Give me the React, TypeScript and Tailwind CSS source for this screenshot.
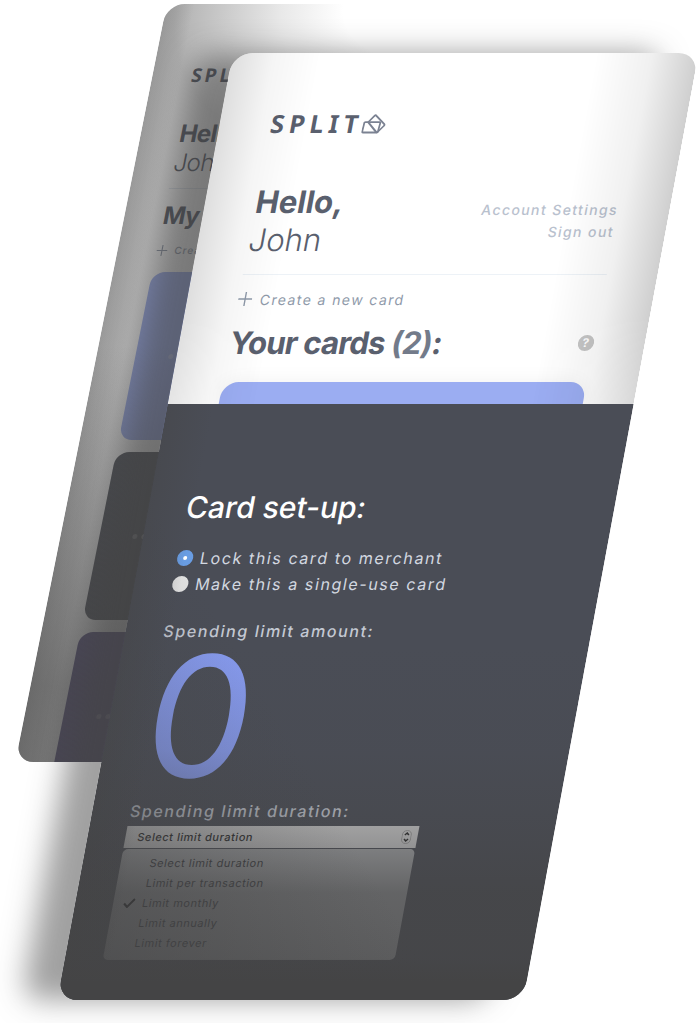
import React from 'react';

const durations = [
  'Select limit duration',
  'Limit per transaction',
  'Limit monthly',
  'Limit annually',
  'Limit forever',
];

function LogoMark({ className }: { className: string }) {
  return (
    <svg viewBox="0 0 24 20" className={className} fill="none" stroke="currentColor" strokeWidth="1.800" strokeLinejoin="round" aria-hidden="true">
      <path d="M2.500 8.200h14a1 1 0 0 1 1 1l-.8 8.300a1 1 0 0 1-1 1H2a1 1 0 0 1-1-1l.5-8.300a1 1 0 0 1 1-1z" />
      <path d="M5.200 8.200l5.400-6.600a1 1 0 0 1 1.500 0l9.600 8.600a1 1 0 0 1 0 1.500l-5.200 6.300a1 1 0 0 1-1.500 0z" />
    </svg>
  );
}

function Plus({ className }: { className: string }) {
  return (
    <svg viewBox="0 0 14 14" className={className} stroke="currentColor" strokeWidth="1.400" aria-hidden="true">
      <path d="M7 0v14M0 7h14" />
    </svg>
  );
}

function BackCard({ tone }: { tone: string }) {
  return (
    <div className={`flex h-[168px] shrink-0 items-center gap-1 rounded-[13px] pl-[33px] ${tone}`}>
      <span className="size-[5px] rounded-full bg-white/30" />
      <span className="size-[5px] rounded-full bg-white/30" />
      <span className="size-[5px] rounded-full bg-white/30" />
    </div>
  );
}

function CardsPanel() {
  return (
    <section className="absolute left-[13%] top-1 h-[758px] w-2/5 -skew-x-[11.3deg] overflow-hidden rounded-[18px] bg-white px-[39px] pt-[59px] text-[#4d525f]">
      <div className="flex h-6 items-center font-['Noto_Sans',sans-serif] text-[19px] font-bold tracking-[3px]">
        SPLIT
        <LogoMark className="ml-1 h-4 w-5" />
      </div>
      <div className="mt-8 text-[24px] leading-[29px] tracking-tight">
        <p className="font-bold">Hello,</p>
        <p className="font-light">John</p>
      </div>
      <hr className="mt-[11px] border-[#e2e8f0]" />
      <h2 className="mt-3 text-[24px] font-bold leading-[30px] tracking-tight">My cards:</h2>
      <button type="button" className="mt-[9px] flex h-5 items-center gap-[7px] text-[10px] font-medium tracking-widest text-[#8d97a8]">
        <Plus className="size-[11px]" />
        Create a new card
      </button>
      <div className="mt-3 flex flex-col gap-3">
        <BackCard tone="bg-[#9badf2]" />
        <BackCard tone="bg-[#4a4d56]" />
        <BackCard tone="bg-[#544b80]" />
      </div>
      <div className="pointer-events-none absolute inset-0 bg-[radial-gradient(ellipse_250px_170px_at_260px_0px,transparent_33%,rgba(68,68,68,0.12)_58%,rgba(68,68,68,0.42)_100%)]" />
      <div className="pointer-events-none absolute inset-0 bg-[linear-gradient(to_right,rgba(68,68,68,0.22),transparent_28px)]" />
      <div className="pointer-events-none absolute inset-0 bg-[linear-gradient(to_bottom,transparent_45%,rgba(68,68,68,0.55)_90%)]" />
    </section>
  );
}

function AccountSection() {
  return (
    <section className="relative bg-white px-[51px] pt-[57px]">
      <div className="flex h-7 items-center font-['Noto_Sans',sans-serif] text-[25px] font-bold tracking-[5px] text-[#5a606e]">
        SPLIT
        <LogoMark className="h-5 w-6 text-[#7b8292]" />
      </div>
      <div className="mt-[45px] flex items-center justify-between">
        <div className="text-[31px] leading-[38px] text-[#5a606e]">
          <h1 className="font-bold">Hello,</h1>
          <p className="font-light">John</p>
        </div>
        <nav className="flex flex-col items-end text-[14px] font-medium leading-[22px] tracking-widest text-[#b9c1ce]">
          <a href="#settings">Account Settings</a>
          <a href="#signout">Sign out</a>
        </nav>
      </div>
      <hr className="mt-[15px] border-[#edf2f7]" />
      <button type="button" className="mt-[14px] flex h-5 items-center gap-2 text-[14px] tracking-widest text-[#8f9aaa]">
        <Plus className="size-[14px]" />
        Create a new card
      </button>
      <div className="mt-[14px] flex h-10 items-center justify-between">
        <h2 className="text-[31px] font-bold tracking-tight text-[#5a606e]">
          Your cards <span className="text-[#737b8a]">(2)</span>:
        </h2>
        <button type="button" aria-label="Help" className="flex size-4 items-center justify-center rounded-full bg-[#c6c6c6] text-[12px] font-bold text-white">
          ?
        </button>
      </div>
      <div className="mt-[19px] h-[22px] rounded-t-[16px] bg-[#9badf2] shadow-[0_0_20px_rgba(0,0,0,0.06)]" />
      <div className="pointer-events-none absolute inset-0 bg-[linear-gradient(to_right,rgba(0,0,0,0.13),rgba(0,0,0,0.04)_9%,transparent_19%,transparent_78%,rgba(0,0,0,0.06)_90%,rgba(0,0,0,0.19))] [mask-image:linear-gradient(to_bottom,black_75%,rgba(0,0,0,0.8))]" />
    </section>
  );
}

function SetupSection() {
  return (
    <section className="relative bg-[#4a4d56] px-[38px] pb-10 pt-[85px]">
      <h2 className="text-[30px] font-medium leading-9 text-white">Card set-up:</h2>
      <div className="mt-5 text-[16px] leading-[26px] tracking-widest text-[#d3d8e0]">
        <label className="flex items-center gap-[7px]">
          <input type="radio" name="mode" defaultChecked className="size-4 appearance-none rounded-full bg-[#e2e2e2] checked:border-[6px] checked:border-[#699de3] checked:bg-white" />
          Lock this card to merchant
        </label>
        <label className="flex items-center gap-[7px]">
          <input type="radio" name="mode" className="size-4 appearance-none rounded-full bg-[#e2e2e2] checked:border-[6px] checked:border-[#699de3] checked:bg-white" />
          Make this a single-use card
        </label>
      </div>
      <label htmlFor="amount" className="mt-[22px] block text-[16px] font-medium leading-6 tracking-widest text-[#c4c9d3]">
        Spending limit amount:
      </label>
      <input
        id="amount"
        type="text"
        inputMode="numeric"
        defaultValue="0"
        className="mt-[7px] block h-[132px] w-full bg-transparent text-[168px] font-normal leading-[132px] text-[#869aee] outline-none"
      />
      <label htmlFor="duration" className="mt-[17px] block text-[16px] font-medium leading-6 tracking-widest text-[#cbd0da]">
        Spending limit duration:
      </label>
      <div className="relative mt-[3px] w-3/4">
        <select id="duration" className="block h-[22px] w-full appearance-none bg-[#dcdcdc] pl-3 text-[11px] font-medium tracking-wider text-[#222]">
          {durations.map((d) => (
            <option key={d}>{d}</option>
          ))}
        </select>
        <svg viewBox="0 0 10 14" className="pointer-events-none absolute right-[6px] top-1 h-[14px] w-[10px]" fill="none" stroke="#222" aria-hidden="true">
          <rect x="0.500" y="0.500" width="9" height="13" rx="4.500" stroke="#999" strokeWidth="0.800" />
          <path d="M3 5l2-2 2 2M3 9l2 2 2-2" strokeWidth="1.500" />
        </svg>
      </div>
      <ul role="listbox" aria-label="Limit duration" className="mt-px w-3/4 rounded-[5px] bg-[#b4b6b8] pb-[7px] pt-1 text-[11px] leading-5 tracking-wider text-[#2d2f33]">
        {durations.map((d, i) => (
          <li key={d} role="option" aria-selected={i === 2} className="flex items-center pl-[10px]">
            <span className="flex w-[19px] items-center">
              {i === 2 && (
                <svg viewBox="0 0 12 10" className="h-[10px] w-3" fill="none" stroke="#000" strokeWidth="2" aria-hidden="true">
                  <path d="M1 5.500l3.500 3.500L11 1" />
                </svg>
              )}
            </span>
            {d}
          </li>
        ))}
      </ul>
      <div className="pointer-events-none absolute inset-0 bg-[linear-gradient(to_bottom,rgba(68,68,69,0)_40%,rgba(68,68,69,0.1)_58%,rgba(68,68,69,0.35)_69%,rgba(68,68,69,0.47)_74%,rgba(68,68,69,0.72)_82%,rgba(68,68,69,0.78)_93%,rgb(68,68,69)_97%)]" />
      <div className="pointer-events-none absolute inset-0 bg-[linear-gradient(to_top_right,rgba(68,68,69,0.6),transparent_42%)]" />
      <div className="pointer-events-none absolute inset-0 bg-[linear-gradient(to_right,rgba(68,68,69,0.4),transparent_10%)]" />
    </section>
  );
}

export default function App() {
  return (
    <main className="relative flow-root min-h-screen overflow-hidden bg-white pb-[22px] font-[Inter,sans-serif]">
      <CardsPanel />
      <div className="relative ml-[20.7%] mt-[53px] w-[66.5%] -skew-x-[10.5deg] rounded-[20px] shadow-[-36px_0_28px_rgba(68,68,68,0.5)]">
        <div className="overflow-hidden rounded-[20px]">
          <AccountSection />
          <SetupSection />
        </div>
      </div>
    </main>
  );
}
